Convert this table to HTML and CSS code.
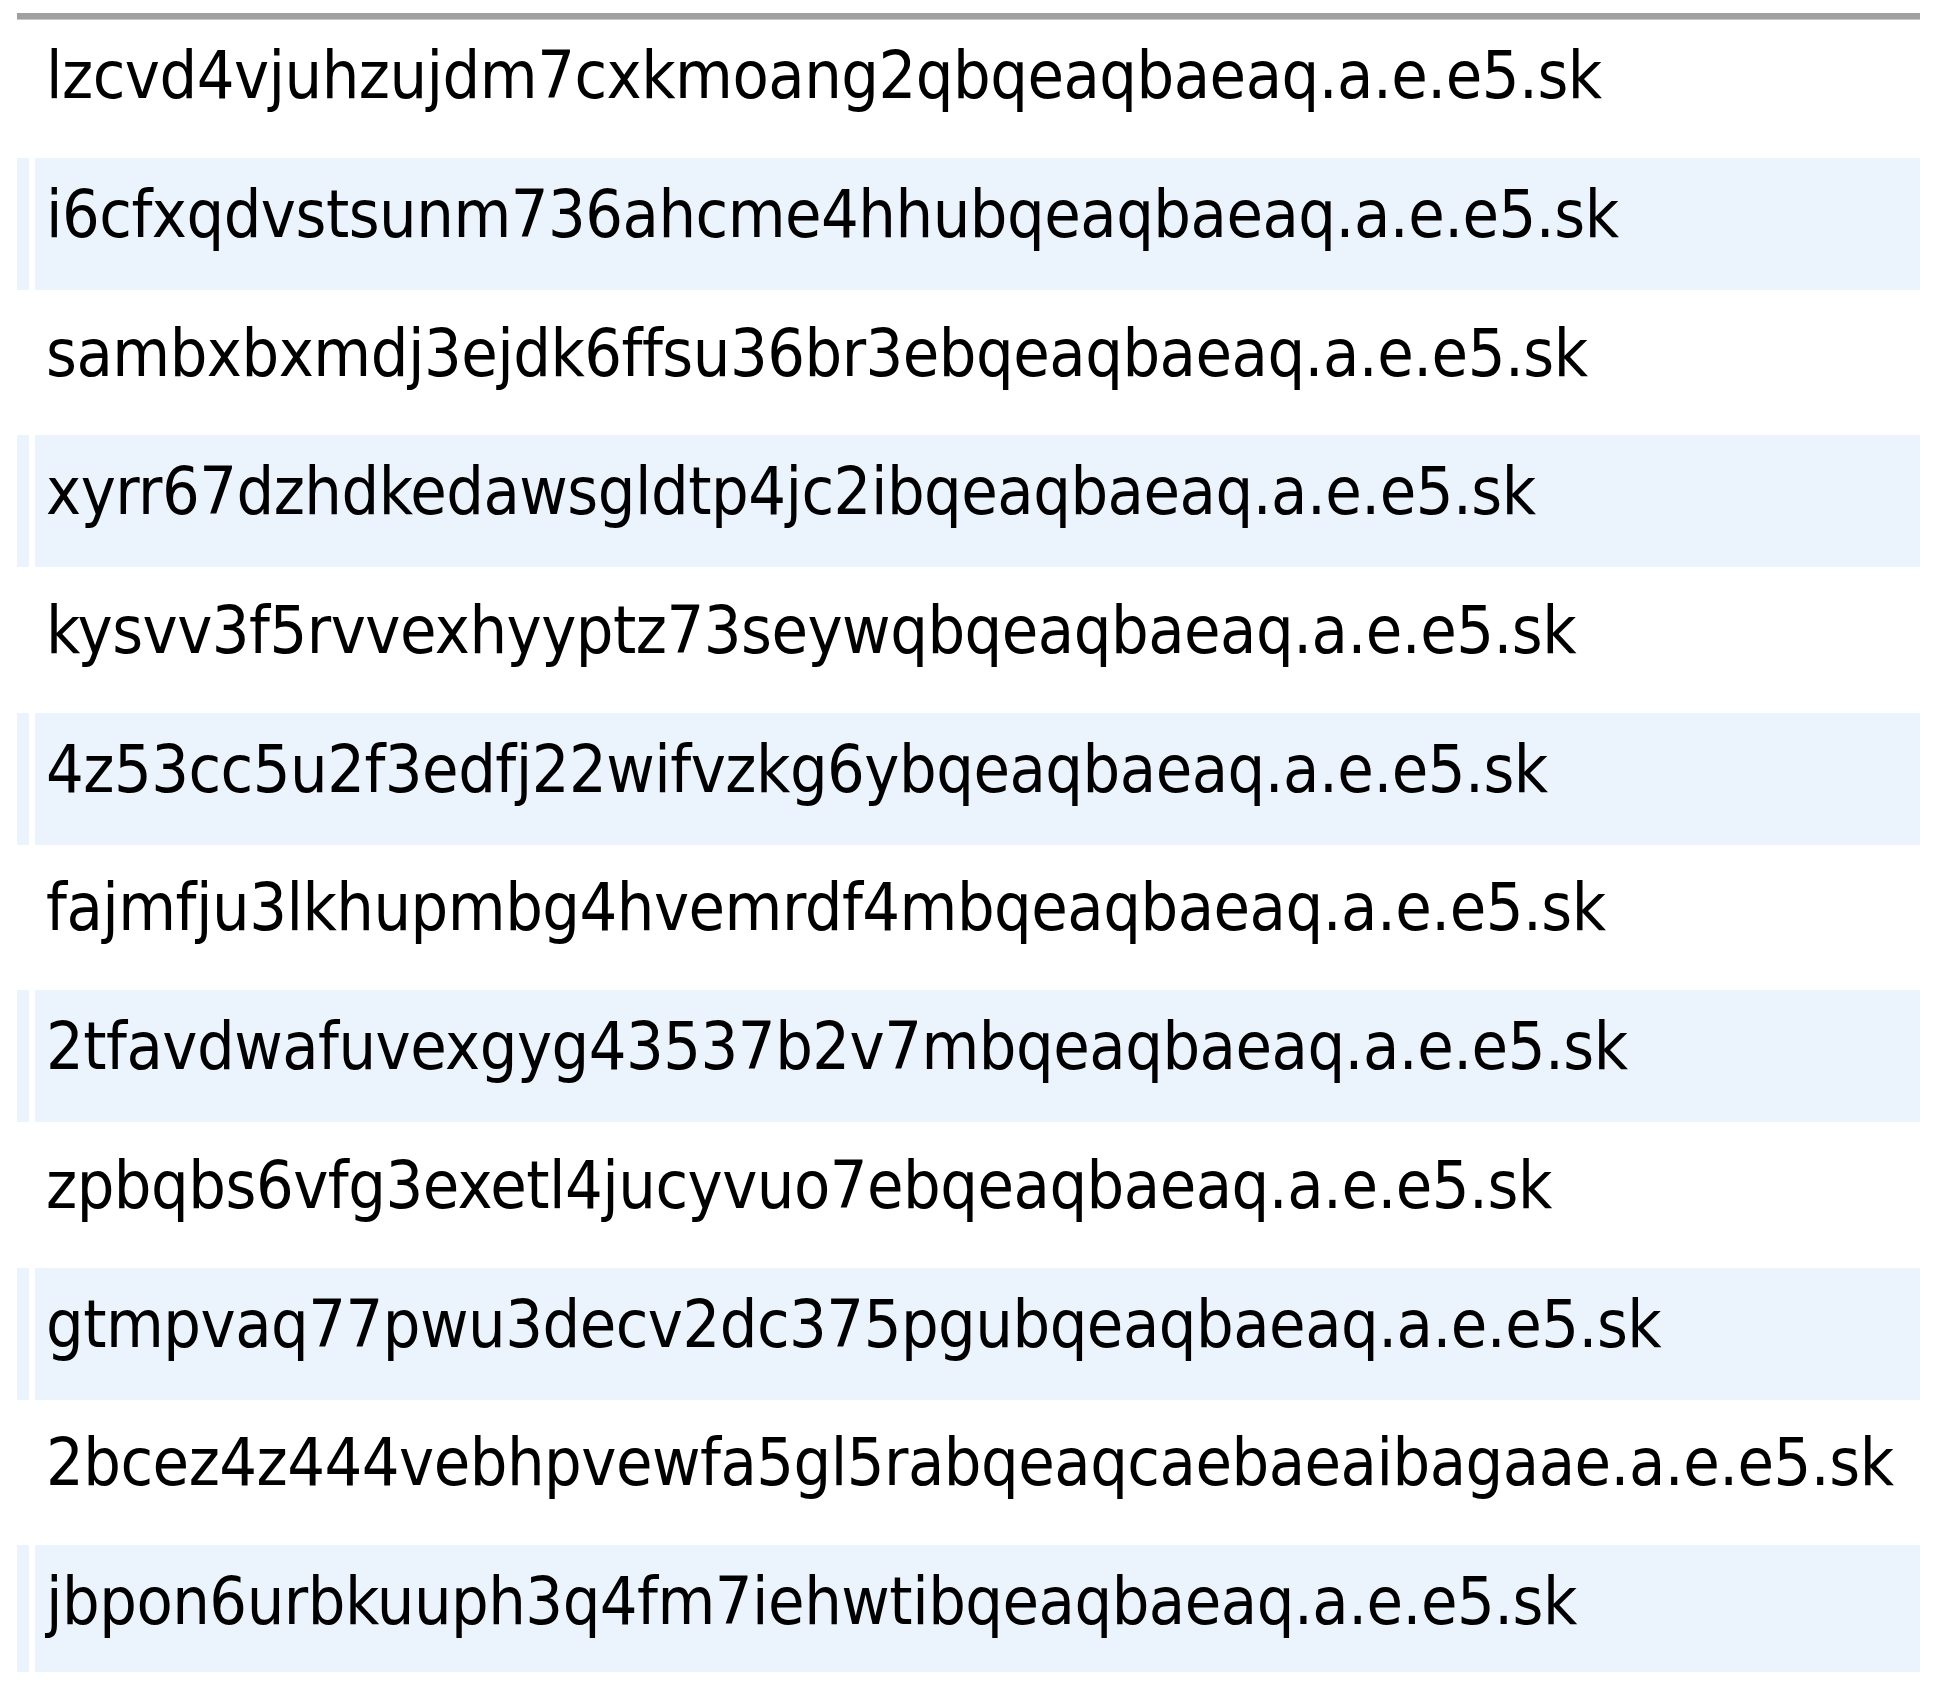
FILE: index.html
```html
<!DOCTYPE html>
<html lang="en">
<head>
<meta charset="utf-8">
<title>Host list</title>
<link rel="stylesheet" href="styles.css">
</head>
<body>
<div class="list">
  <div class="row"><span class="mark"></span><span class="gap"></span><span class="name">lzcvd4vjuhzujdm7cxkmoang2qbqeaqbaeaq.a.e.e5.sk</span></div>
  <div class="row alt"><span class="mark"></span><span class="gap"></span><span class="name">i6cfxqdvstsunm736ahcme4hhubqeaqbaeaq.a.e.e5.sk</span></div>
  <div class="row"><span class="mark"></span><span class="gap"></span><span class="name">sambxbxmdj3ejdk6ffsu36br3ebqeaqbaeaq.a.e.e5.sk</span></div>
  <div class="row alt"><span class="mark"></span><span class="gap"></span><span class="name">xyrr67dzhdkedawsgldtp4jc2ibqeaqbaeaq.a.e.e5.sk</span></div>
  <div class="row"><span class="mark"></span><span class="gap"></span><span class="name">kysvv3f5rvvexhyyptz73seywqbqeaqbaeaq.a.e.e5.sk</span></div>
  <div class="row alt"><span class="mark"></span><span class="gap"></span><span class="name">4z53cc5u2f3edfj22wifvzkg6ybqeaqbaeaq.a.e.e5.sk</span></div>
  <div class="row"><span class="mark"></span><span class="gap"></span><span class="name">fajmfju3lkhupmbg4hvemrdf4mbqeaqbaeaq.a.e.e5.sk</span></div>
  <div class="row alt"><span class="mark"></span><span class="gap"></span><span class="name">2tfavdwafuvexgyg43537b2v7mbqeaqbaeaq.a.e.e5.sk</span></div>
  <div class="row"><span class="mark"></span><span class="gap"></span><span class="name">zpbqbs6vfg3exetl4jucyvuo7ebqeaqbaeaq.a.e.e5.sk</span></div>
  <div class="row alt"><span class="mark"></span><span class="gap"></span><span class="name">gtmpvaq77pwu3decv2dc375pgubqeaqbaeaq.a.e.e5.sk</span></div>
  <div class="row"><span class="mark"></span><span class="gap"></span><span class="name">2bcez4z444vebhpvewfa5gl5rabqeaqcaebaeaibagaae.a.e.e5.sk</span></div>
  <div class="row alt last"><span class="mark"></span><span class="gap"></span><span class="name">jbpon6urbkuuph3q4fm7iehwtibqeaqbaeaq.a.e.e5.sk</span></div>
</div>
</body>
</html>
```

FILE: styles.css
```css
html, body {
  margin: 0;
  padding: 0;
  background: #ffffff;
}

body {
  width: 1941px;
  height: 1692px;
  overflow: hidden;
}

.list {
  margin: 13px 21px 0 17px;
  border-top: 6px solid #a0a0a0;
  box-shadow: inset 0 1px 0 #c8c8c8;
  display: flex;
  flex-direction: column;
}

.row {
  display: grid;
  grid-template-columns: 12px 6px 1fr;
  height: 138.7px;
  padding-bottom: 6.7px;
  box-sizing: border-box;
}

.row:first-child {
  height: 139px;
}

.name {
  font-family: "DejaVu Sans Condensed", "DejaVu Sans", sans-serif;
  font-size: 66px;
  letter-spacing: -0.5px;
  line-height: 113px;
  color: #000000;
  padding-left: 11px;
  white-space: nowrap;
}

.alt .mark,
.alt .name {
  background: #ebf3fc;
}

.alt.last {
  padding-bottom: 12px;
}
```
